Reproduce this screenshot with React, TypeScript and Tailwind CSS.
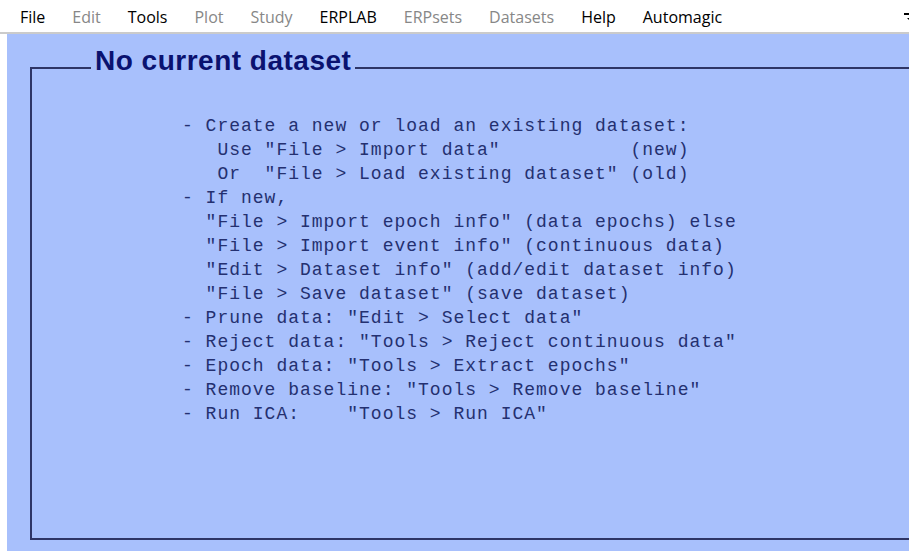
import React from 'react';

type MenuItem = { label: string; enabled: boolean };

const menuItems: MenuItem[] = [
  { label: 'File', enabled: true },
  { label: 'Edit', enabled: false },
  { label: 'Tools', enabled: true },
  { label: 'Plot', enabled: false },
  { label: 'Study', enabled: false },
  { label: 'ERPLAB', enabled: true },
  { label: 'ERPsets', enabled: false },
  { label: 'Datasets', enabled: false },
  { label: 'Help', enabled: true },
  { label: 'Automagic', enabled: true },
];

// Help text shown while no dataset is loaded (kept verbatim, spacing matters)
const helpLines = [
  '- Create a new or load an existing dataset:',
  '   Use "File > Import data"           (new)',
  '   Or  "File > Load existing dataset" (old)',
  '- If new,',
  '  "File > Import epoch info" (data epochs) else',
  '  "File > Import event info" (continuous data)',
  '  "Edit > Dataset info" (add/edit dataset info)',
  '  "File > Save dataset" (save dataset)',
  '- Prune data: "Edit > Select data"',
  '- Reject data: "Tools > Reject continuous data"',
  '- Epoch data: "Tools > Extract epochs"',
  '- Remove baseline: "Tools > Remove baseline"',
  '- Run ICA:    "Tools > Run ICA"',
];

const MenuBar = () => (
  <div className="flex h-[34px] shrink-0 items-center gap-[27px] border-b-2 border-[#cbcbcb] bg-white pl-[20px] pt-[2px] font-['Open_Sans',sans-serif] text-[16px]">
    {menuItems.map((item) => (
      <span
        key={item.label}
        className={item.enabled ? 'font-medium text-black' : 'text-[#878787]'}
      >
        {item.label}
      </span>
    ))}
    <div className="ml-auto flex h-full w-[6px] items-center overflow-hidden">
      {/* undock arrow, clipped by the window edge */}
      <svg width="10" height="10" viewBox="0 0 10 10" className="shrink-0">
        <path d="M1 2 H7 V8" fill="none" stroke="#000" strokeWidth="2" />
        <path d="M4 6 L7 9 L10 6" fill="#000" />
      </svg>
    </div>
  </div>
);

export default function App() {
  return (
    <div className="flex h-[551px] w-[909px] flex-col overflow-hidden bg-white">
      <MenuBar />
      <div className="ml-[7px] flex flex-1 flex-col bg-[#a8c0fc] pb-[11px] pt-[13px]">
        <fieldset className="ml-[23px] mr-[-20px] flex-1 border-2 border-[#2e3566]">
          <legend className="ml-[59px] px-[4px] pb-[13px] font-['Liberation_Sans',Arial,sans-serif] text-[28px] font-bold leading-none tracking-[0.5px] text-[#0a1270]">
            No current dataset
          </legend>
          <div className="pl-[150px] pt-[26px] font-['Liberation_Mono','Courier_New',monospace] text-[18px] leading-[24px] tracking-[1px] text-[#243070]">
            {helpLines.map((line, i) => (
              <div key={i} className="whitespace-pre">
                {line}
              </div>
            ))}
          </div>
        </fieldset>
      </div>
    </div>
  );
}
